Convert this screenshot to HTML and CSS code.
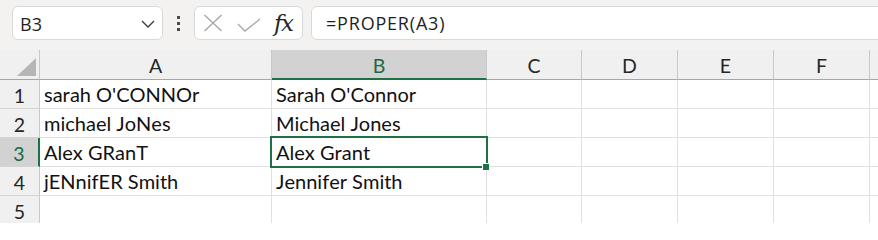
FILE: index.html
```html
<!DOCTYPE html>
<html lang="en">
<head>
<meta charset="utf-8">
<title>Sheet</title>
<link rel="stylesheet" href="styles.css">
</head>
<body>
<div class="app">
  <div class="toolbar">
    <div class="namebox">
      <span class="name">B3</span>
      <svg class="chev" width="14" height="8" viewBox="0 0 14 8"><path d="M1 1 L7 7 L13 1" fill="none" stroke="#3a3a3a" stroke-width="1.3"/></svg>
    </div>
    <div class="dots"><span></span><span></span><span></span></div>
    <div class="fxbox">
      <svg class="icon-x" width="20" height="18" viewBox="0 0 20 18"><path d="M1.5 1 L18.5 17 M18.5 1 L1.5 17" fill="none" stroke="#a8a8a8" stroke-width="1.4"/></svg>
      <svg class="icon-check" width="24" height="14" viewBox="0 0 24 14"><path d="M1 6 L8 13 L23 1" fill="none" stroke="#a8a8a8" stroke-width="1.4"/></svg>
      <span class="fx">fx</span>
    </div>
    <div class="formula">=PROPER(A3)</div>
  </div>
  <div class="sheet">
    <div class="hd corner"><svg width="19" height="18" viewBox="0 0 19 18"><path d="M19 0 L19 18 L0 18 Z" fill="#b6b6b6"/></svg></div>
    <div class="hd col">A</div>
    <div class="hd col sel-col">B</div>
    <div class="hd col">C</div>
    <div class="hd col">D</div>
    <div class="hd col">E</div>
    <div class="hd col">F</div>
    <div class="hd col last"></div>

    <div class="hd row">1</div>
    <div class="cell">sarah O'CONNOr</div>
    <div class="cell">Sarah O'Connor</div>
    <div class="cell"></div><div class="cell"></div><div class="cell"></div><div class="cell"></div><div class="cell last"></div>

    <div class="hd row">2</div>
    <div class="cell">michael JoNes</div>
    <div class="cell">Michael Jones</div>
    <div class="cell"></div><div class="cell"></div><div class="cell"></div><div class="cell"></div><div class="cell last"></div>

    <div class="hd row sel-row">3</div>
    <div class="cell">Alex GRanT</div>
    <div class="cell active">Alex Grant<span class="handle"></span></div>
    <div class="cell"></div><div class="cell"></div><div class="cell"></div><div class="cell"></div><div class="cell last"></div>

    <div class="hd row">4</div>
    <div class="cell">jENnifER Smith</div>
    <div class="cell">Jennifer Smith</div>
    <div class="cell"></div><div class="cell"></div><div class="cell"></div><div class="cell"></div><div class="cell last"></div>

    <div class="hd row">5</div>
    <div class="cell"></div>
    <div class="cell"></div>
    <div class="cell"></div><div class="cell"></div><div class="cell"></div><div class="cell"></div><div class="cell last"></div>
  </div>
</div>
</body>
</html>
```

FILE: styles.css
```css
html, body {
  margin: 0;
  padding: 0;
  background: #ffffff;
}

.app {
  width: 878px;
  height: 223px;
  overflow: hidden;
}

.toolbar {
  height: 50px;
  box-sizing: border-box;
  padding: 6px 0 0 12px;
  background: #f3f2f1;
  display: flex;
  align-items: flex-start;
  overflow: hidden;
}

.namebox {
  width: 151px;
  height: 34px;
  box-sizing: border-box;
  background: #fff;
  border: 1px solid #d9d9d9;
  border-radius: 6px;
  display: flex;
  align-items: center;
  padding: 0 7px 0 7px;
  font-family: "Open Sans", "Noto Sans", sans-serif;
  font-size: 18px;
  color: #1f1f1f;
}

.name {
  flex: 1;
  line-height: 1;
  padding-top: 1px;
}

.chev {
  display: block;
  margin-top: 2px;
}

.dots {
  width: 4px;
  margin: 10px 0 0 14px;
  display: flex;
  flex-direction: column;
  gap: 3px;
}

.dots span {
  display: block;
  width: 3px;
  height: 3px;
  background: #4a4a4a;
}

.fxbox {
  margin-left: 13px;
  width: 109px;
  height: 34px;
  box-sizing: border-box;
  background: #fff;
  border: 1px solid #d9d9d9;
  border-radius: 6px;
  display: flex;
  align-items: center;
  padding-left: 8px;
}

.icon-x {
  display: block;
}

.icon-check {
  display: block;
  margin-left: 14px;
  margin-top: 4px;
}

.fx {
  margin-left: 13px;
  font-family: "DejaVu Serif", "Liberation Serif", serif;
  font-style: italic;
  font-size: 23px;
  color: #262626;
  line-height: 1;
  letter-spacing: -1.5px;
}

.formula {
  margin-left: 8px;
  flex: 1;
  margin-right: -10px;
  height: 34px;
  box-sizing: border-box;
  background: #fff;
  border: 1px solid #d9d9d9;
  border-radius: 6px;
  display: flex;
  align-items: center;
  padding-left: 14px;
  font-family: "Open Sans", "Noto Sans", sans-serif;
  font-size: 18px;
  letter-spacing: 0.8px;
  color: #1f1f1f;
}

.sheet {
  display: grid;
  grid-template-columns: 40px 232px 215px 95px 96px 96px 96px 1fr;
  grid-template-rows: 30px repeat(5, 29px);
  font-family: "Lato", "Liberation Sans", sans-serif;
  font-size: 20px;
  font-kerning: none;
  font-variant-ligatures: none;
}

.hd {
  background: #f0f0f0;
  box-sizing: border-box;
  color: #262626;
  display: flex;
  align-items: center;
  justify-content: center;
  font-size: 19.5px;
}

.corner {
  border-right: 1px solid #c8c8c8;
  border-bottom: 1px solid #a6a6a6;
  align-items: flex-end;
  justify-content: flex-end;
  padding: 0 3px 3px 0;
}

.corner svg {
  display: block;
}

.col {
  border-right: 1px solid #c8c8c8;
  border-bottom: 1px solid #a6a6a6;
  padding-top: 2px;
}

.col.last {
  border-right: none;
}

.sel-col {
  background: #d2d2d2;
  color: #1b6b3f;
  border-bottom: 2px solid #1e7145;
}

.row {
  border-right: 1px solid #c8c8c8;
  border-bottom: 1px solid #d4d4d4;
  padding-top: 2px;
}

.sel-row {
  background: #d2d2d2;
  color: #1b6b3f;
  border-right: 2px solid #1e7145;
}

.cell {
  box-sizing: border-box;
  border-right: 1px solid #e0e0e0;
  border-bottom: 1px solid #e0e0e0;
  padding: 0 4px 2px 4px;
  display: flex;
  align-items: flex-end;
  color: #111;
  white-space: nowrap;
  line-height: 24px;
}

.cell.last {
  border-right: none;
}

.active {
  position: relative;
}

.active::after {
  content: "";
  position: absolute;
  left: -2px;
  top: -2px;
  right: -2px;
  bottom: -2px;
  border: 2px solid #1e7145;
  pointer-events: none;
}

.handle {
  position: absolute;
  right: -4px;
  bottom: -5px;
  width: 6px;
  height: 6px;
  background: #1e7145;
  border: 1px solid #fff;
  z-index: 2;
}
```
